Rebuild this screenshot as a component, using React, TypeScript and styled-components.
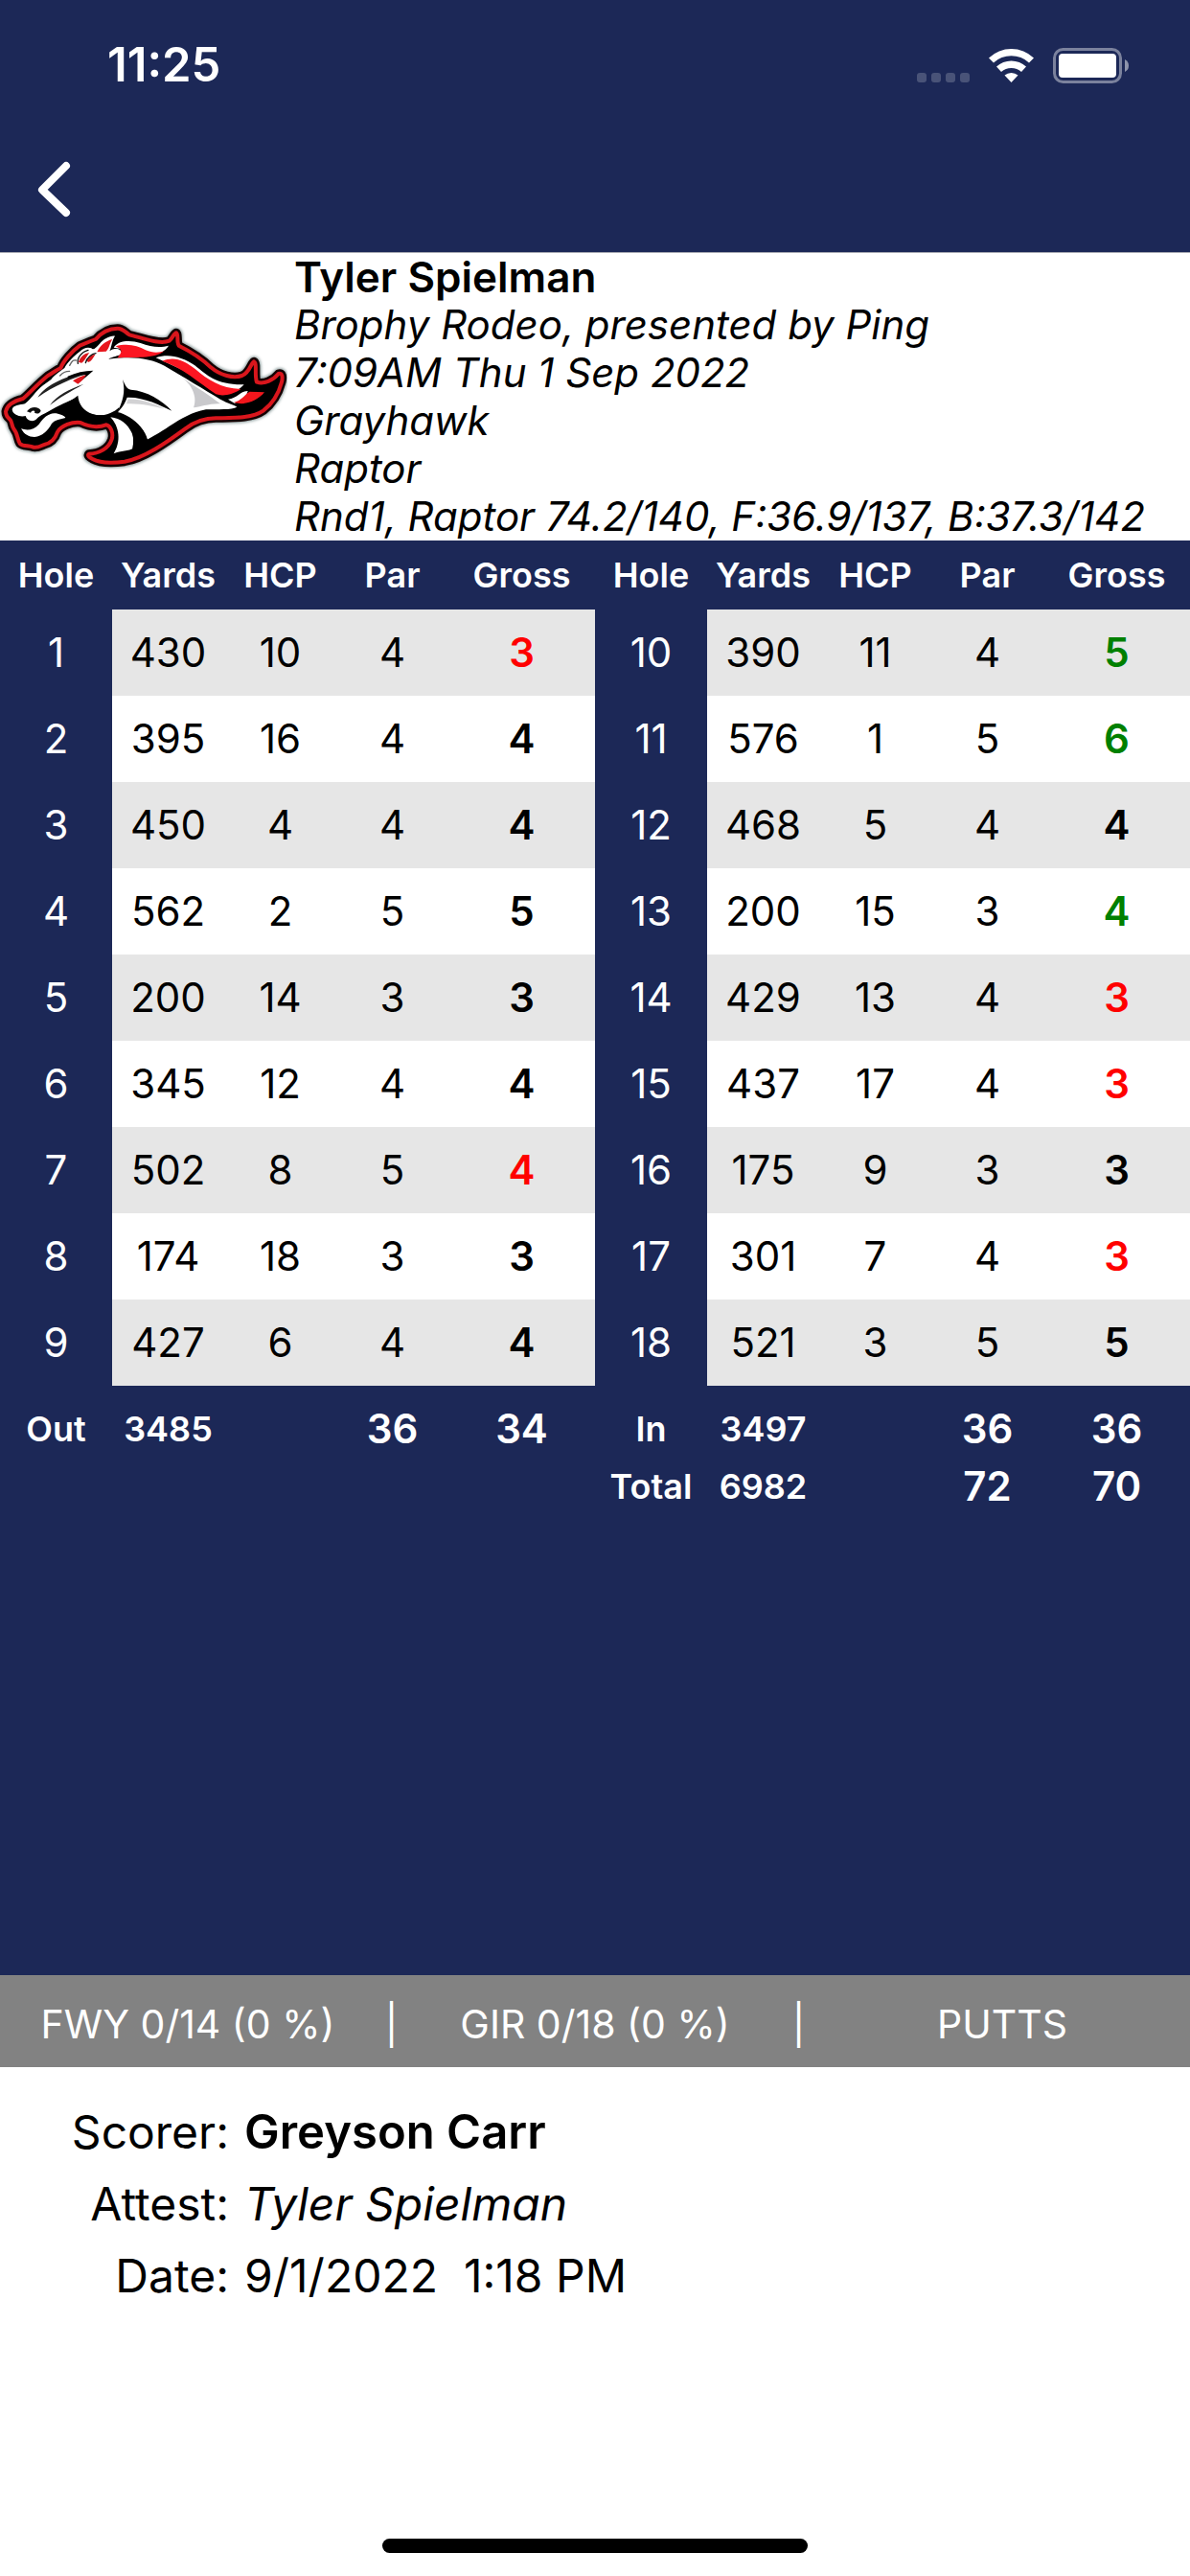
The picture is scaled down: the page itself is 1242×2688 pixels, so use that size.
import React from "react";
import styled, { createGlobalStyle } from "styled-components";

const NAVY = "#1c2857";

const GlobalStyle = createGlobalStyle`
  * { box-sizing: border-box; }
  body {
    margin: 0;
    background: #fff;
    color: #000;
    font-family: Inter, Roboto, "Liberation Sans", sans-serif;
    font-size: 42px;
  }
`;

const Page = styled.div`
  min-height: 100vh;
  display: flex;
  flex-direction: column;
`;

const Header = styled.header`
  background: ${NAVY};
  color: #fff;
  border-bottom: 1px solid #a9aab3;
`;

const StatusBar = styled.div`
  display: flex;
  align-items: center;
  justify-content: space-between;
  height: 132px;
  padding: 4px 63px 0 112px;
`;

const Clock = styled.time`
  font-size: 49px;
  font-weight: 600;
  line-height: 60px;
`;

const BackButton = styled.button`
  display: block;
  width: 112px;
  height: 131px;
  padding: 0;
  border: 0;
  background: none;
  color: #fff;
`;

const Summary = styled.section`
  display: grid;
  grid-template-columns: 300px 1fr;
  column-gap: 7px;
`;

const Lines = styled.div`
  line-height: 50px;
`;

const Player = styled.h1`
  margin: 0;
  font-size: 44px;
  font-weight: 600;
  line-height: 50px;
`;

const Detail = styled.p`
  margin: 0;
  font-style: italic;
  white-space: nowrap;
`;

const Scorecard = styled.main`
  flex: 1;
  display: grid;
  grid-template-columns: 1fr 1fr;
  align-items: start;
  background: ${NAVY};
  color: #fff;
`;

const Nine = styled.table`
  display: block;
  text-align: center;

  thead, tbody, tfoot { display: block; }
  tfoot { padding-top: 15px; }
`;

const Row = styled.tr<{ $height: number }>`
  display: grid;
  grid-template-columns: repeat(4, 13fr) 17fr;
  line-height: ${(p) => p.$height}px;
`;

const Heading = styled.th`
  padding: 0;
  font-size: 36px;
  font-weight: 600;
`;

const HoleNumber = styled.th`
  padding: 0;
  font-weight: 400;
`;

const Cell = styled.td<{ $shaded: boolean }>`
  padding: 0;
  color: #000;
  background: ${(p) => (p.$shaded ? "#e6e6e6" : "#fff")};
`;

const GrossCell = styled(Cell)<{ $diff: number }>`
  font-weight: 600;
  color: ${(p) => (p.$diff < 0 ? "#f00" : p.$diff > 0 ? "#008000" : "#000")};
`;

const SumYards = styled.td`
  padding: 0;
  font-size: 36px;
  font-weight: 600;
`;

const SumCell = styled.td`
  padding: 0;
  font-weight: 600;
`;

const StatsBar = styled.section`
  display: grid;
  grid-template-columns: 1fr 33px 1fr 33px 1fr;
  height: 96px;
  padding-top: 6px;
  background: #828282;
  color: #fff;
  font-size: 41px;
  line-height: 90px;
  text-align: center;
  white-space: nowrap;
`;

const Signatures = styled.dl`
  display: grid;
  grid-template-columns: 239px 1fr;
  column-gap: 16px;
  margin: 0;
  padding: 30px 0 237px;
  font-size: 48px;
  line-height: 75px;
`;

const Label = styled.dt`
  text-align: right;
`;

const Value = styled.dd<{ $look?: "bold" | "italic" }>`
  margin: 0;
  white-space: pre;
  font-size: ${(p) => (p.$look === "bold" ? 49 : 48)}px;
  font-weight: ${(p) => (p.$look === "bold" ? 600 : 400)};
  font-style: ${(p) => (p.$look === "italic" ? "italic" : "normal")};
`;

const HomeIndicator = styled.div`
  width: 444px;
  height: 15px;
  margin: 0 auto 24px;
  border-radius: 8px;
  background: #000;
`;

// hole, yards, handicap, par, gross
type Hole = [number, number, number, number, number];

const front: Hole[] = [
  [1, 430, 10, 4, 3],
  [2, 395, 16, 4, 4],
  [3, 450, 4, 4, 4],
  [4, 562, 2, 5, 5],
  [5, 200, 14, 3, 3],
  [6, 345, 12, 4, 4],
  [7, 502, 8, 5, 4],
  [8, 174, 18, 3, 3],
  [9, 427, 6, 4, 4],
];

const back: Hole[] = [
  [10, 390, 11, 4, 5],
  [11, 576, 1, 5, 6],
  [12, 468, 5, 4, 4],
  [13, 200, 15, 3, 4],
  [14, 429, 13, 4, 3],
  [15, 437, 17, 4, 3],
  [16, 175, 9, 3, 3],
  [17, 301, 7, 4, 3],
  [18, 521, 3, 5, 5],
];

type Sum = { label: string; holes: Hole[] };

const total = (holes: Hole[], index: number) =>
  holes.reduce((sum, hole) => sum + hole[index], 0);

function NineTable({ holes, sums }: { holes: Hole[]; sums: Sum[] }) {
  return (
    <Nine>
      <thead>
        <Row $height={72}>
          {["Hole", "Yards", "HCP", "Par", "Gross"].map((name) => (
            <Heading key={name} scope="col">{name}</Heading>
          ))}
        </Row>
      </thead>
      <tbody>
        {holes.map(([hole, yards, hcp, par, gross], i) => {
          const shaded = i % 2 === 0;
          return (
            <Row key={hole} $height={90}>
              <HoleNumber scope="row">{hole}</HoleNumber>
              <Cell $shaded={shaded}>{yards}</Cell>
              <Cell $shaded={shaded}>{hcp}</Cell>
              <Cell $shaded={shaded}>{par}</Cell>
              <GrossCell $shaded={shaded} $diff={gross - par}>{gross}</GrossCell>
            </Row>
          );
        })}
      </tbody>
      <tfoot>
        {sums.map(({ label, holes: counted }) => (
          <Row key={label} $height={60}>
            <Heading scope="row">{label}</Heading>
            <SumYards>{total(counted, 1)}</SumYards>
            <SumCell />
            <SumCell>{total(counted, 3)}</SumCell>
            <SumCell>{total(counted, 4)}</SumCell>
          </Row>
        ))}
      </tfoot>
    </Nine>
  );
}

function StatusIcons() {
  return (
    <svg width="222" height="38" viewBox="957 48 222 38" aria-hidden="true">
      <g fill="#fff" fillOpacity="0.2">
        <rect x="957" y="75" width="10" height="10" rx="3" />
        <rect x="972" y="75" width="10" height="10" rx="3" />
        <rect x="987" y="75" width="10" height="10" rx="3" />
        <rect x="1002" y="75" width="10" height="10" rx="3" />
      </g>
      <g fill="#fff">
        <path d="M1032 59.500a34 34 0 0 1 47 0l-5 5a27 27 0 0 0-37 0z" />
        <path d="M1040 68.500a23 23 0 0 1 31 0l-5 5.500a15.500 15.500 0 0 0-21 0z" />
        <path d="M1048.500 77.500a11 11 0 0 1 14 0l-7 7.500z" />
      </g>
      <rect x="1100.500" y="50.500" width="69" height="34" rx="9" fill="none" stroke="#fff" strokeOpacity="0.42" strokeWidth="3" />
      <rect x="1105" y="55" width="60" height="25" rx="4" fill="#fff" />
      <path d="M1174 61q4 2 4 6.500t-4 6.500z" fill="#fff" fillOpacity="0.5" />
    </svg>
  );
}

const OUTLINE =
  "M18 358C22 338 40 326 72 318C95 298 120 270 150 246C168 236 176 228 190 222C198 200 225 170 250 152L284 138L300 132C320 108 345 98 368 98C385 98 392 110 405 118C440 126 500 150 530 137C540 130 545 112 552 112C560 116 552 140 560 152C600 172 630 190 660 220C690 245 730 256 758 246C782 236 786 206 795 202C806 206 796 246 804 266C826 274 856 260 872 240C884 236 886 250 882 266C874 296 858 330 824 356C790 380 730 378 680 379C640 378 612 388 580 412C520 456 450 505 390 515C350 520 310 518 290 507C280 502 272 496 278 491C310 490 340 475 350 445C356 425 346 402 332 400C300 412 275 404 252 393C225 390 192 402 180 422C174 440 160 458 138 462C128 466 118 472 105 470C92 464 70 468 62 458C54 446 56 428 44 414C34 400 40 390 30 382C20 374 18 368 18 358Z";

function HorseLogo() {
  return (
    <svg width="300" height="300" viewBox="0 0 900 900" role="img" aria-label="Bronco logo">
      <defs>
        <filter id="soft" x="-5%" y="-5%" width="110%" height="110%">
          <feGaussianBlur stdDeviation="2" />
        </filter>
        <filter id="halo" x="-5%" y="-5%" width="110%" height="110%">
          <feGaussianBlur stdDeviation="5" />
        </filter>
      </defs>
      <g transform="translate(0 138)" strokeLinejoin="round" strokeLinecap="round">
        <path d={OUTLINE} fill="none" stroke="#8fa0a0" strokeWidth="34" filter="url(#halo)" />
        <g filter="url(#soft)">
          <path d={OUTLINE} fill="#000" stroke="#150306" strokeWidth="27" />
          <path d={OUTLINE} fill="#000" stroke="#d9141c" strokeWidth="12" />

          {/* head and neck */}
          <path
            fill="#fff"
            d="M38 352C40 338 62 338 78 334C98 318 112 294 135 276L160 258C168 246 186 234 202 222C212 202 232 184 250 170C262 158 276 156 286 160C292 168 300 158 312 146C324 132 344 120 360 122C350 136 350 156 342 172C344 164 366 158 376 166L384 178C370 184 350 188 340 194C420 184 470 192 515 215C575 250 640 290 690 320C715 334 735 338 742 344C725 354 680 350 645 352C600 360 570 380 530 404C500 424 480 436 460 446C456 420 432 392 405 376C392 368 380 362 368 360C340 372 300 374 275 362C255 350 244 336 242 314C220 324 180 340 152 358C138 366 122 372 112 384C98 392 84 386 80 372C64 376 40 370 38 352Z"
          />
          {/* mouth and jaw */}
          <path fill="#000" d="M46 376C70 380 78 376 84 386C100 396 122 388 130 374C120 400 92 410 68 404Z" />
          <path fill="#fff" d="M66 412C84 418 104 418 122 398C136 376 156 360 176 364C190 368 204 372 205 378C190 382 172 384 162 396C150 418 132 436 108 438C90 438 76 430 66 412Z" />
          <path fill="#000" d="M156 358C180 342 215 332 244 308C246 336 262 356 290 366C320 376 350 366 374 344L366 372C345 388 320 392 290 386C250 374 225 384 208 378C196 364 176 358 156 358Z" />
          {/* cheek */}
          <ellipse cx="318" cy="290" rx="72" ry="76" fill="#fff" />
          <path fill="#000" d="M384 258C392 276 396 288 410 290C460 294 506 322 538 356C500 338 450 312 398 314C390 336 380 350 366 362C384 330 394 296 384 258Z" />
          <path fill="#d2d2d4" d="M400 320C440 318 480 332 515 350C480 342 440 332 396 334Z" />
          {/* nose bridge and nostril */}
          <path fill="#222" d="M118 314C148 272 205 246 290 232C222 258 170 276 118 314ZM156 338C180 306 214 290 262 272C220 296 190 312 156 338Z" />
          <path fill="#111" d="M84 358C96 340 122 342 128 356C124 366 114 366 108 362C112 354 100 352 96 362Z" />
          <path fill="#000" d="M212 248C238 236 264 230 292 230C276 244 262 256 244 270L268 244C248 244 232 248 212 256Z" />
          <path fill="#e0161e" d="M228 262C244 252 258 246 270 244C262 256 254 266 244 272Z" />
          <path fill="none" stroke="#666" strokeWidth="4" d="M188 246C196 236 208 232 218 232M218 214C226 198 230 196 238 198" />
          {/* neck shading */}
          <path fill="#c9c9cc" d="M560 245C620 285 660 310 690 334C660 332 625 344 606 346C618 316 606 274 560 245Z" />
          <path fill="#fff" d="M346 376C378 380 400 398 412 424C420 440 416 456 420 472C402 484 378 480 356 490C380 452 374 406 346 376Z" />
          <path fill="#000" d="M366 364C410 376 452 408 462 446L452 472L414 476C426 430 410 396 366 364Z" />

          {/* forelock */}
          <path fill="#e8161f" d="M304 172C314 150 330 138 352 132C342 146 344 158 332 170Z" />
          <path fill="#d9141c" d="M246 204C250 188 264 176 280 174C272 184 266 200 256 206Z" />
          <path fill="#d9141c" d="M272 198C280 184 290 178 298 180C292 190 286 202 276 204Z" />
          <path fill="none" stroke="#111" strokeWidth="4" d="M244 208C240 192 254 172 276 166M268 206C272 188 288 178 300 176" />
          {/* mane */}
          <path fill="#fff" d="M356 158C370 134 410 134 440 144C475 158 505 158 528 152C515 172 495 180 470 176Z" />
          <path fill="#fb1520" d="M362 154C400 144 430 152 456 166C478 176 502 174 516 168C480 196 420 186 368 190C380 174 388 166 362 154Z" />
          <path fill="#fff" d="M488 190C530 176 570 188 610 214C650 246 680 276 764 274C750 290 738 294 720 296Z" />
          <path fill="#fb1520" d="M508 200C545 184 578 198 612 226C650 258 690 286 754 288C730 304 700 312 676 304C620 266 570 220 508 200Z" />
          <path fill="#fff" d="M714 320C745 316 752 294 776 294L766 322L734 332Z" />
          <path fill="#f2161f" d="M732 330C762 320 768 302 782 296L828 298C812 318 786 332 756 334Z" />
        </g>
      </g>
    </svg>
  );
}

export default function App() {
  return (
    <Page>
      <GlobalStyle />
      <Header>
        <StatusBar>
          <Clock>11:25</Clock>
          <StatusIcons />
        </StatusBar>
        <BackButton type="button" aria-label="Back">
          <svg width="112" height="131" viewBox="0 0 112 131" aria-hidden="true">
            <path d="M69 41L44 66l25 24" fill="none" stroke="currentColor" strokeWidth="8" strokeLinecap="round" strokeLinejoin="round" />
          </svg>
        </BackButton>
      </Header>

      <Summary>
        <HorseLogo />
        <Lines>
          <Player>Tyler Spielman</Player>
          <Detail>Brophy Rodeo, presented by Ping</Detail>
          <Detail>7:09AM Thu 1 Sep 2022</Detail>
          <Detail>Grayhawk</Detail>
          <Detail>Raptor</Detail>
          <Detail>Rnd1, Raptor 74.2/140, F:36.9/137, B:37.3/142</Detail>
        </Lines>
      </Summary>

      <Scorecard>
        <NineTable holes={front} sums={[{ label: "Out", holes: front }]} />
        <NineTable
          holes={back}
          sums={[
            { label: "In", holes: back },
            { label: "Total", holes: [...front, ...back] },
          ]}
        />
      </Scorecard>

      <StatsBar>
        <span>FWY 0/14 (0 %)</span>
        <span>|</span>
        <span>GIR 0/18 (0 %)</span>
        <span>|</span>
        <span>PUTTS</span>
      </StatsBar>

      <Signatures>
        <Label>Scorer:</Label>
        <Value $look="bold">Greyson Carr</Value>
        <Label>Attest:</Label>
        <Value $look="italic">Tyler Spielman</Value>
        <Label>Date:</Label>
        <Value>{"9/1/2022  1:18 PM"}</Value>
      </Signatures>
      <HomeIndicator />
    </Page>
  );
}
